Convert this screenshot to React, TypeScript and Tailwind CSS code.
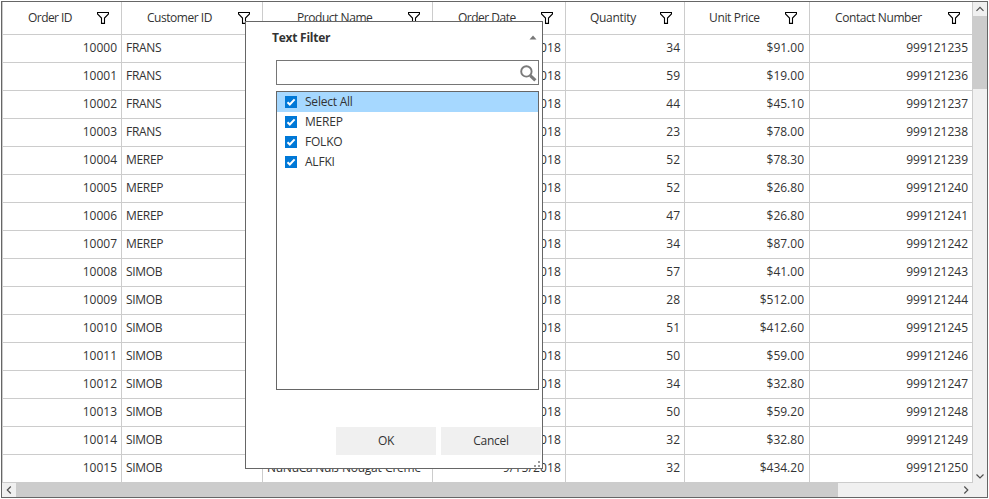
import React from 'react';

type Column = { title: string; head: string; body: string; text: string };

const columns: Column[] = [
  { title: 'Order ID', head: 'w-[119px] pl-[25px]', body: 'w-[119px] justify-end pr-1', text: 'tracking-[-0.55px]' },
  { title: 'Customer ID', head: 'w-[141px] pl-[25px]', body: 'w-[141px] pl-1 tracking-[-0.3px]', text: 'tracking-[-0.47px]' },
  { title: 'Product Name', head: 'w-[170px] pl-[34px]', body: 'w-[170px] pl-1 tracking-[-0.26px]', text: 'tracking-[-0.45px]' },
  { title: 'Order Date', head: 'w-[133px] pl-[25px]', body: 'w-[133px] justify-end pr-1 tracking-[0.15px]', text: 'tracking-[-0.5px]' },
  { title: 'Quantity', head: 'w-[119px] pl-[24px]', body: 'w-[119px] justify-end pr-1', text: 'tracking-[-0.3px]' },
  { title: 'Unit Price', head: 'w-[125px] pl-[24px]', body: 'w-[125px] justify-end pr-[5px]', text: 'tracking-[-0.35px]' },
  { title: 'Contact Number', head: 'w-[163px] pl-[25px]', body: 'w-[163px] justify-end pr-1', text: 'tracking-[-0.42px]' },
];

const customers = [
  'FRANS', 'FRANS', 'FRANS', 'FRANS', 'MEREP', 'MEREP', 'MEREP', 'MEREP',
  'SIMOB', 'SIMOB', 'SIMOB', 'SIMOB', 'SIMOB', 'SIMOB', 'SIMOB', 'SIMOB',
];
const quantities = [34, 59, 44, 23, 52, 52, 47, 34, 57, 28, 51, 50, 34, 50, 32, 32];
const prices = [
  '$91.00', '$19.00', '$45.10', '$78.00', '$78.30', '$26.80', '$26.80', '$87.00',
  '$41.00', '$512.00', '$412.60', '$59.00', '$32.80', '$59.20', '$32.80', '$434.20',
];

const rows = customers.map((customer, i) => [
  String(10000 + i),
  customer,
  i === 15 ? 'NuNuCa Nuß-Nougat-Creme' : '',
  i === 15 ? '9/15/2018' : '2018',
  String(quantities[i]),
  prices[i],
  String(999121235 + i),
]);

function Funnel() {
  return (
    <svg width="12" height="12" viewBox="0 0 12 12" className="ml-auto mr-3 shrink-0" fill="none" stroke="#000" strokeWidth="1.1">
      <path d="M0.5 0.5H11.5V2L7.5 6V11.4H4.5V6L0.5 2Z" />
    </svg>
  );
}

function Chevron({ d }: { d: string }) {
  return (
    <svg width="14" height="14" viewBox="0 0 14 14" className="shrink-0" fill="none" stroke="#505050" strokeWidth="1.2">
      <path d={d} />
    </svg>
  );
}

function CheckItem({ label, selected }: { label: string; selected?: boolean }) {
  return (
    <div className={`flex h-5 items-center pl-2 ${selected ? 'bg-[#a6d8ff]' : ''}`}>
      <span className="flex size-3 bg-[#0078d7]">
        <svg width="12" height="12" viewBox="0 0 12 12" fill="none" stroke="#fff" strokeWidth="2">
          <path d="M2.5 6.2L4.8 8.5L9.6 3.4" />
        </svg>
      </span>
      <span className="ml-2 tracking-[-0.22px]">{label}</span>
    </div>
  );
}

function FilterPopup() {
  return (
    <div className="absolute left-[245px] top-[21px] flex h-[448px] w-[298px] flex-col border border-[#666] bg-white">
      <div className="flex h-[30px] items-center justify-between pl-[26px] pr-[5px]">
        <span className="pt-px font-bold tracking-[-0.25px]">Text Filter</span>
        <svg width="8" height="5" viewBox="0 0 8 5"><path d="M0.5 4.5L4 0.5L7.5 4.5Z" fill="#777" /></svg>
      </div>
      <div className="ml-[30px] mt-2 flex h-[25px] w-[263px] justify-end border border-[#767676] pr-px pt-1">
        <svg width="17" height="17" viewBox="0 0 17 17" fill="none" stroke="#7a7a7a">
          <circle cx="6.4" cy="6.4" r="5.2" strokeWidth="1.9" />
          <path d="M10.3 10.6L15.4 15.4" strokeWidth="3.2" />
        </svg>
      </div>
      <div className="ml-[30px] mt-1.5 h-[299px] w-[263px] border border-[#666]">
        <CheckItem label="Select All" selected />
        <CheckItem label="MEREP" />
        <CheckItem label="FOLKO" />
        <CheckItem label="ALFKI" />
      </div>
      <div className="ml-[90px] mt-[37px] flex gap-[5px] tracking-[-0.3px]">
        <button className="h-7 w-[100px] bg-[#f0f0f0]">OK</button>
        <button className="h-7 w-[100px] bg-[#f0f0f0]">Cancel</button>
      </div>
      <svg width="6" height="6" viewBox="0 0 6 6" className="ml-auto mr-0.5 mt-[6px]" fill="#999">
        <path d="M4 0h2v2H4zM4 4h2v2H4zM0 4h2v2H0z" />
      </svg>
    </div>
  );
}

export default function App() {
  return (
    <div className="relative h-[499px] w-[989px] overflow-hidden bg-white pl-px pt-px font-['Open_Sans',sans-serif] text-[12px] leading-4 text-[#333]">
      <div className="h-[497px] w-[987px] border border-[#666]">
        <div className="flex h-[481px]">
          <div className="w-[971px] border-l border-[#ccc]">
            <div className="flex h-[33px] border-b border-[#ccc]">
              {columns.map((c) => (
                <div key={c.title} className={`flex shrink-0 items-center border-r border-[#ccc] ${c.head}`}>
                  <span className={`whitespace-nowrap ${c.text}`}>{c.title}</span>
                  <Funnel />
                </div>
              ))}
            </div>
            {rows.map((row) => (
              <div key={row[0]} className="flex h-7 border-b border-[#ccc]">
                {row.map((cell, i) => (
                  <div key={columns[i].title} className={`flex shrink-0 items-center whitespace-nowrap border-r border-[#ccc] pb-0.5 ${columns[i].body}`}>
                    {cell}
                  </div>
                ))}
              </div>
            ))}
          </div>
          <div className="flex w-[14px] flex-col bg-[#f0f0f0]">
            <Chevron d="M3.5 8.8L7 5.3L10.5 8.8" />
            <div className="h-[73px] bg-[#ccc]" />
            <div className="mt-auto"><Chevron d="M3.5 5.5L7 9L10.5 5.5" /></div>
          </div>
        </div>
        <div className="flex h-[14px] bg-[#f0f0f0]">
          <Chevron d="M8.8 3.5L5.3 7L8.8 10.5" />
          <div className="w-[822px] bg-[#ccc]" />
          <div className="ml-auto mr-[14px]"><Chevron d="M5.3 3.5L8.8 7L5.3 10.5" /></div>
        </div>
      </div>
      <FilterPopup />
    </div>
  );
}
